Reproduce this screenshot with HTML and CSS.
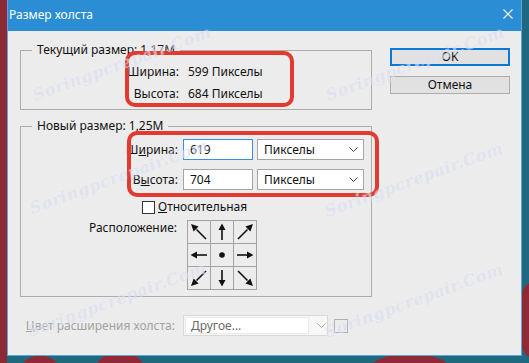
FILE: index.html
```html
<!DOCTYPE html>
<html lang="ru">
<head>
<meta charset="utf-8">
<title>Размер холста</title>
<link rel="stylesheet" href="styles.css">
</head>
<body>
<div class="window">
  <div class="titlebar">
    <span class="title">Размер холста</span>
    <svg class="close" width="10" height="10" viewBox="0 0 10 10"><path d="M0.5 0.5 L9.5 9.5 M9.5 0.5 L0.5 9.5" stroke="#fff" stroke-width="1.1" fill="none"/></svg>
  </div>
  <div class="content">
    <div class="left">
      <div class="group g1">
        <span class="gtitle">Текущий размер: 1,17M</span>
        <div class="info">
          <span class="lbl">Ширина:</span><span class="val">599 Пикселы</span>
          <span class="lbl">Высота:</span><span class="val">684 Пикселы</span>
        </div>
      </div>
      <div class="group g2">
        <span class="gtitle">Новый размер: 1,25M</span>
        <div class="fields">
          <span class="lbl">Ш<u>и</u>рина:</span>
          <div class="input focused">619</div>
          <div class="select">Пикселы<svg class="chev" width="9" height="5" viewBox="0 0 9 5"><path d="M0.5 0.5 L4.5 4.5 L8.5 0.5" stroke="#444" fill="none"/></svg></div>
          <span class="lbl">В<u>ы</u>сота:</span>
          <div class="input">704</div>
          <div class="select">Пикселы<svg class="chev" width="9" height="5" viewBox="0 0 9 5"><path d="M0.5 0.5 L4.5 4.5 L8.5 0.5" stroke="#444" fill="none"/></svg></div>
        </div>
        <div class="check-row"><span class="checkbox"></span><span><u>О</u>тносительная</span></div>
        <div class="anchor-row">
          <span class="lbl anchor-lbl">Расположение:</span>
          <div class="anchor">
            <div class="cell"><svg viewBox="0 0 22 22"><path class="shaft" d="M8.5 8.5 L18 18"/><polygon points="3,3 10.6,5.6 5.6,10.6"/></svg></div>
            <div class="cell"><svg viewBox="0 0 22 22"><path class="shaft" d="M11 8 L11 19"/><polygon points="11,2.5 7.5,9 14.5,9"/></svg></div>
            <div class="cell"><svg viewBox="0 0 22 22"><path class="shaft" d="M13.5 8.5 L4 18"/><polygon points="19,3 16.4,10.6 11.4,5.6"/></svg></div>
            <div class="cell"><svg viewBox="0 0 22 22"><path class="shaft" d="M8 11 L19 11"/><polygon points="2.5,11 9,7.5 9,14.5"/></svg></div>
            <div class="cell"><svg viewBox="0 0 22 22"><circle cx="11" cy="11" r="2.8"/></svg></div>
            <div class="cell"><svg viewBox="0 0 22 22"><path class="shaft" d="M3 11 L14 11"/><polygon points="19.5,11 13,7.5 13,14.5"/></svg></div>
            <div class="cell"><svg viewBox="0 0 22 22"><path class="shaft" d="M8.5 13.5 L18 4"/><polygon points="3,19 5.6,11.4 10.6,16.4"/></svg></div>
            <div class="cell"><svg viewBox="0 0 22 22"><path class="shaft" d="M11 3 L11 14"/><polygon points="11,19.5 7.5,13 14.5,13"/></svg></div>
            <div class="cell"><svg viewBox="0 0 22 22"><path class="shaft" d="M13.5 13.5 L4 4"/><polygon points="19,19 11.4,16.4 16.4,11.4"/></svg></div>
          </div>
        </div>
      </div>
    </div>
    <div class="buttons">
      <div class="btn default">OK</div>
      <div class="btn">Отмена</div>
    </div>
    <div class="bottom-row">
      <span class="lbl disabled"><u>Ц</u>вет расширения холста:</span>
      <div class="dropdown"><div class="dd-field">Другое...</div><svg class="dd-chev" width="9" height="5" viewBox="0 0 9 5"><path d="M0.5 0.5 L4.5 4.5 L8.5 0.5" stroke="#a8a8a8" fill="none"/></svg></div>
      <div class="swatch"></div>
    </div>
  </div>
  <div class="mark m1"></div>
  <div class="mark m2"></div>
  <span class="wm" style="left:4px;top:52px">Soringpcrepair.Com</span>
  <span class="wm" style="left:297px;top:52px">Soringpcrepair.Com</span>
  <span class="wm" style="left:1px;top:165px">Soringpcrepair.Com</span>
  <span class="wm" style="left:296px;top:168px">Soringpcrepair.Com</span>
  <span class="wm" style="left:-1px;top:288px">Soringpcrepair.Com</span>
  <span class="wm" style="left:296px;top:289px">Soringpcrepair.Com</span>
</div>
</body>
</html>
```

FILE: styles.css
```css
html, body {
  margin: 0;
  padding: 0;
}
body {
  width: 529px;
  height: 363px;
  overflow: hidden;
  font-family: "Noto Sans", "Liberation Sans", sans-serif;
  font-size: 12px;
  line-height: 16px;
  color: #111;
  background:
    radial-gradient(ellipse 40px 30px at 120px 370px, #8e2a36 60%, transparent 62%),
    radial-gradient(ellipse 70px 30px at 410px 372px, #8e2a36 60%, transparent 62%),
    radial-gradient(ellipse 20px 60px at 530px 320px, #8e2a36 60%, transparent 62%),
    radial-gradient(ellipse 30px 20px at 40px 368px, #8e2a36 60%, transparent 62%),
    linear-gradient(to right, #8b2934 0, #8b2934 7px, #1e6980 7px, #1e6980 100%);
}
.window {
  position: relative;
  margin-left: 7px;
  width: 515px;
  height: 356px;
  box-sizing: border-box;
  border: 1px solid #5fa3da;
  border-top: none;
  background: #ececec;
  overflow: hidden;
}
.titlebar {
  height: 30px;
  background: #2b8dd3;
  display: flex;
  align-items: center;
  justify-content: space-between;
  padding: 0 9px 1px 1px;
  color: #fff;
  font-size: 12px;
  margin: 0 -1px;
}
.title {
  padding-left: 1px;
}
.close {
  margin-bottom: 2px;
}
.content {
  display: grid;
  grid-template-columns: 352px 120px;
  column-gap: 18px;
  padding: 17px 11px 0 12px;
  align-items: start;
}
.left {
  margin-top: 2px;
}
.group {
  position: relative;
  border: 1px solid #acacac;
  box-sizing: border-box;
}
.gtitle {
  position: absolute;
  top: -9px;
  left: 11px;
  padding: 0 5px;
  background: #ececec;
}
.g1 {
  height: 60px;
  padding-top: 13px;
}
.info {
  display: grid;
  grid-template-columns: 158px auto;
  column-gap: 9px;
  row-gap: 6px;
}
.lbl {
  text-align: right;
}
.g2 {
  height: 171px;
  margin-top: 16px;
  padding-top: 12px;
}
.fields {
  display: grid;
  grid-template-columns: 157px 70px 106px;
  grid-auto-rows: 21px;
  column-gap: 5px;
  row-gap: 9px;
  align-items: center;
}
.fields > .select {
  margin-left: -1px;
}
.input, .select {
  height: 21px;
  box-sizing: border-box;
  border: 1px solid #a5a5a5;
  background: #fff;
  padding: 1px 0 0 6px;
  line-height: 18px;
}
.input.focused {
  border-color: #3d8ee0;
}
.select {
  display: flex;
  justify-content: space-between;
  align-items: center;
  padding: 0 5px 0 6px;
  line-height: 19px;
}
.chev {
  display: block;
}
.check-row {
  display: flex;
  align-items: center;
  gap: 3px;
  margin: 10px 0 0 121px;
  height: 14px;
}
.checkbox {
  width: 13px;
  height: 13px;
  box-sizing: border-box;
  border: 1px solid #333;
  background: #fff;
}
.anchor-row {
  display: flex;
  align-items: flex-start;
  gap: 10px;
  margin-top: 6px;
}
.anchor-lbl {
  width: 156px;
}
.anchor {
  display: grid;
  grid-template-columns: repeat(3, 22px);
  grid-template-rows: repeat(3, 22px);
  gap: 1px;
  padding: 1px;
  background: #a3a3a3;
}
.cell {
  background: #ececec;
}
.cell svg {
  display: block;
  width: 22px;
  height: 22px;
  fill: #111;
}
.shaft {
  stroke: #111;
  stroke-width: 1.6;
  fill: none;
}
.buttons {
  display: flex;
  flex-direction: column;
  gap: 10px;
}
.btn {
  height: 18px;
  box-sizing: border-box;
  border: 1px solid #adadad;
  background: #e1e1e1;
  text-align: center;
  line-height: 15px;
}
.btn.default {
  border: 2px solid #0a78d7;
  line-height: 13px;
}
.bottom-row {
  grid-column: 1 / -1;
  display: flex;
  align-items: center;
  margin-top: 18px;
}
.disabled {
  color: #a2a2a2;
  width: 155px;
}
.dropdown {
  margin-left: 8px;
  width: 145px;
  height: 21px;
  box-sizing: border-box;
  border: 1px solid #d9d9d9;
  background: #f7f7f7;
  display: flex;
  align-items: center;
  padding: 1px;
}
.dd-field {
  width: 124px;
  height: 17px;
  box-sizing: border-box;
  border: 1px solid #ebebeb;
  background: #fff;
  color: #6a6a6a;
  padding-left: 5px;
  line-height: 15px;
}
.dd-chev {
  margin-left: 8px;
}
.swatch {
  margin-left: 6px;
  width: 14px;
  height: 14px;
  box-sizing: border-box;
  border: 1px solid #b0b0b0;
}
.mark {
  position: absolute;
  border: 4px solid #e23a2e;
  border-radius: 10px;
  box-sizing: border-box;
}
.m1 {
  left: 117px;
  top: 51px;
  width: 169px;
  height: 56px;
}
.m2 {
  left: 119px;
  top: 131px;
  width: 252px;
  height: 66px;
}
.wm {
  position: absolute;
  width: 220px;
  white-space: nowrap;
  text-align: center;
  font-family: "DejaVu Serif", serif;
  font-style: italic;
  font-weight: bold;
  font-size: 16px;
  line-height: 24px;
  letter-spacing: 0.5px;
  color: rgba(185, 195, 228, 0.35);
  text-shadow: 0 0 1px rgba(255, 255, 255, 0.5);
  transform: rotate(-20deg);
  pointer-events: none;
}
```
